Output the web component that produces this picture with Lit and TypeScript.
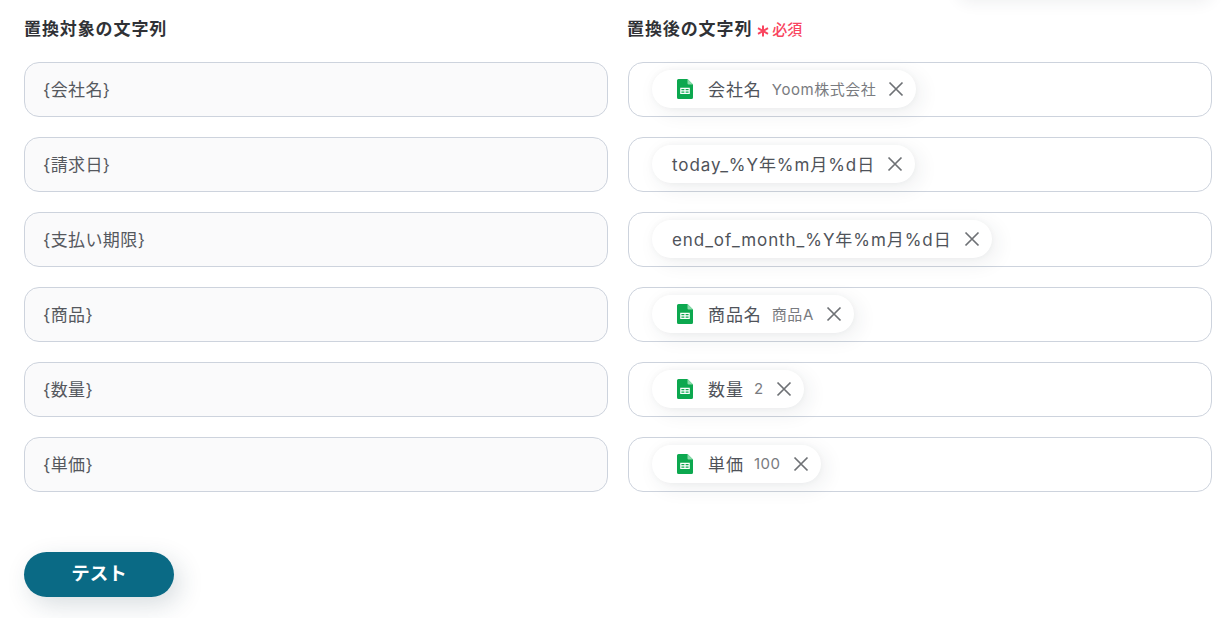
import { LitElement, html, css, svg } from "lit";
import { customElement } from "lit/decorators.js";

type Row = { from: string; name: string; sub?: string; sheet: boolean };

const ROWS: Row[] = [
  { from: "{会社名}", name: "会社名", sub: "Yoom株式会社", sheet: true },
  { from: "{請求日}", name: "today_%Y年%m月%d日", sheet: false },
  { from: "{支払い期限}", name: "end_of_month_%Y年%m月%d日", sheet: false },
  { from: "{商品}", name: "商品名", sub: "商品A", sheet: true },
  { from: "{数量}", name: "数量", sub: "2", sheet: true },
  { from: "{単価}", name: "単価", sub: "100", sheet: true },
];

const sheetIcon = svg`<svg class="sheet" width="16" height="20" viewBox="0 0 16 20">
  <path d="M1.5 0H10.5L16 5.5V18.5a1.5 1.5 0 0 1-1.5 1.5H1.5A1.5 1.5 0 0 1 0 18.5V1.5A1.5 1.5 0 0 1 1.5 0Z" fill="#0ca84f"/>
  <path d="M10.5 0L16 5.5H11.5a1 1 0 0 1-1-1Z" fill="#8adbaa"/>
  <path d="M3.2 8.8H12.8V15H3.2ZM4.4 10V11.3H7.4V10ZM8.6 10V11.3H11.6V10ZM4.4 12.5V13.8H7.4V12.5ZM8.6 12.5V13.8H11.6V12.5Z" fill="#fff" fill-rule="evenodd"/>
</svg>`;

const closeIcon = svg`<svg class="close" width="16" height="16" viewBox="0 0 16 16">
  <path d="M1.5 1.5L14.5 14.5M14.5 1.5L1.5 14.5" stroke="#6e7175" stroke-width="1.7" fill="none"/>
</svg>`;

@customElement("app-root")
export class AppRoot extends LitElement {
  static styles = css`
    :host {
      display: block;
      position: relative;
      height: 618px;
      overflow: hidden;
      background: #fff;
      font-family: Inter, "Noto Sans CJK JP", sans-serif;
      color: #4a4d52;
    }
    .floating {
      position: absolute;
      left: 958px;
      top: -40px;
      width: 254px;
      height: 40px;
      border-radius: 12px;
      background: #fff;
      box-shadow: 0 2px 16px rgba(40, 50, 60, 0.08);
    }
    .page {
      padding: 18px 19px 0 24px;
      display: flex;
      flex-direction: column;
    }
    .heads {
      display: flex;
      height: 22px;
      align-items: center;
      margin-bottom: 22px;
    }
    .head {
      font-size: 17px;
      font-weight: 700;
      letter-spacing: 0.9px;
      color: #303236;
      line-height: 22px;
      white-space: nowrap;
    }
    .head.first {
      width: 603px;
    }
    .req {
      display: inline-flex;
      align-items: center;
      gap: 3px;
      margin-left: 5px;
      color: #f9455f;
      font-size: 15px;
      font-weight: 500;
      letter-spacing: 0;
      line-height: 20px;
      padding-top: 1px;
    }
    .star {
      display: block;
      margin-top: 3px;
    }
    .grid {
      display: grid;
      grid-template-columns: 584px 584px;
      grid-auto-rows: 55px;
      column-gap: 20px;
      row-gap: 20px;
    }
    .cell {
      box-sizing: border-box;
      border: 1px solid #cdd3dd;
      border-radius: 15px;
      display: flex;
      align-items: center;
    }
    .from {
      background: #fafafb;
      padding: 0 18px 2px;
      font-size: 17px;
      letter-spacing: 0.4px;
      color: #55585e;
    }
    .to {
      background: #fff;
      padding: 7px 23px 8px;
      align-items: flex-start;
    }
    .chip {
      height: 38px;
      box-sizing: border-box;
      background: #fff;
      border-radius: 19px;
      display: inline-flex;
      align-items: center;
      padding: 0 20px 0 20px;
      box-shadow: 5px 5px 20px rgba(40, 50, 60, 0.08), 0 0 6px rgba(40, 50, 60, 0.04);
      white-space: nowrap;
    }
    .sheet {
      display: block;
      margin: 0 15px 0 5px;
      flex: none;
    }
    .name {
      font-size: 17px;
      letter-spacing: 0.93px;
      color: #4f535a;
      padding-bottom: 2px;
    }
    .sub {
      font-size: 15px;
      color: #797b80;
      margin-left: 10px;
      letter-spacing: 0.55px;
      padding-bottom: 1px;
    }
    .close {
      display: block;
      flex: none;
      margin-left: 12px;
      margin-right: -8px;
    }
    .actions {
      margin-top: 60px;
    }
    button {
      width: 150px;
      height: 45px;
      border: none;
      border-radius: 23px;
      background: #0a6a85;
      color: #fff;
      font: 700 18.5px Inter, "Noto Sans CJK JP", sans-serif;
      letter-spacing: 0;
      box-shadow: 6px 8px 24px rgba(30, 60, 80, 0.17);
      padding: 0 0 6px;
    }
  `;

  render() {
    return html`
      <div class="floating"></div>
      <div class="page">
        <div class="heads">
          <div class="head first">置換対象の文字列</div>
          <div class="head second">置換後の文字列</div>
          <span class="req">
            <svg class="star" width="12" height="12" viewBox="0 0 12 12">
              <path d="M6 0.5V11.5M1 3.2L11 8.8M11 3.2L1 8.8" stroke="#f9455f" stroke-width="2" fill="none"/>
            </svg>
            必須
          </span>
        </div>
        <div class="grid">
          ${ROWS.map(
            (r) => html`
              <div class="cell from">${r.from}</div>
              <div class="cell to">
                <span class="chip">
                  ${r.sheet ? sheetIcon : ""}
                  <span class="name">${r.name}</span>
                  ${r.sub ? html`<span class="sub">${r.sub}</span>` : ""}
                  ${closeIcon}
                </span>
              </div>
            `
          )}
        </div>
        <div class="actions"><button>テスト</button></div>
      </div>
    `;
  }
}
